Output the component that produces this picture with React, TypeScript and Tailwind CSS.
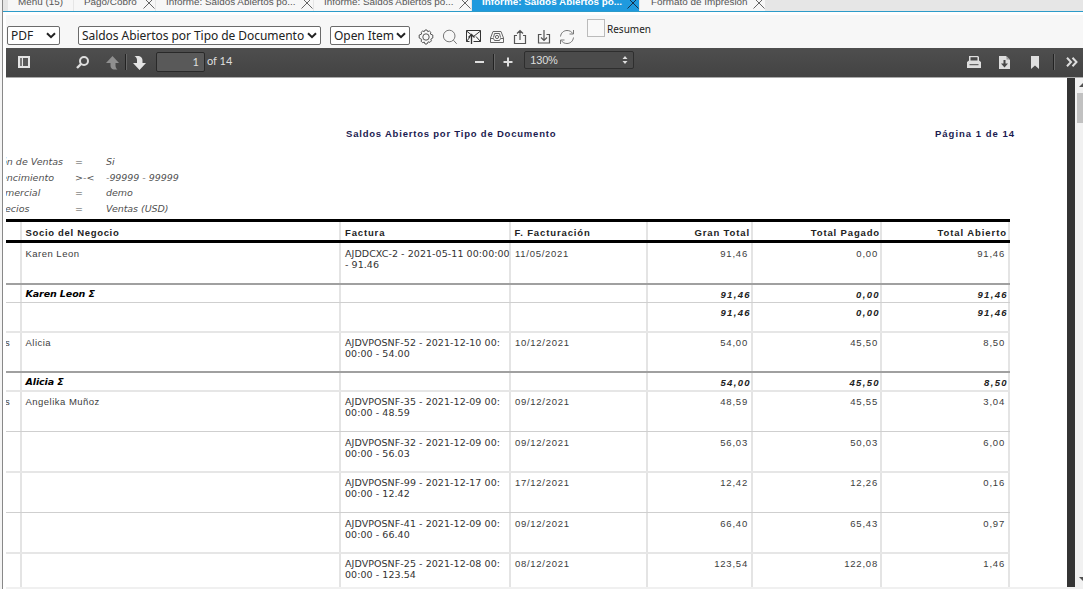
import type { ReactNode } from 'react';

type Tab = { label: string; width: string; pad: string; active?: boolean; closable: boolean };

const tabs: Tab[] = [
  { label: 'Menu (15)', width: 'w-[65px]', pad: 'pl-[10px]', closable: false },
  { label: 'Pago/Cobro', width: 'w-[81px]', pad: 'pl-[10px]', closable: true },
  { label: 'Informe: Saldos Abiertos po...', width: 'w-[157px]', pad: 'pl-[10px]', closable: true },
  { label: 'Informe: Saldos Abiertos po...', width: 'w-[157px]', pad: 'pl-[10px]', closable: true },
  { label: 'Informe: Saldos Abiertos po...', width: 'w-[167px]', pad: 'pl-[10px]', active: true, closable: true },
  { label: 'Formato de Impresión', width: 'w-[125px]', pad: 'pl-[11px]', closable: true },
];

function Close({ dark }: { dark?: boolean }) {
  return (
    <svg className="absolute right-0 top-[-3px]" width="12" height="12" viewBox="0 0 12 12" fill="none" stroke={dark ? '#17304a' : '#666'} strokeWidth="1">
      <path d="M.5.5 11.5 11.5M11.5.5.5 11.5" />
    </svg>
  );
}

function TabStrip() {
  return (
    <div className="flex h-3 overflow-hidden border-b border-[#2c9bc9] bg-[#e6e6e6] pl-[5px]">
      {tabs.map((t, i) => (
        <div
          key={i}
          className={`relative h-[11px] shrink-0 ${t.width} ${t.pad} ${i === 5 ? '' : 'mr-px'} ${t.active ? 'bg-[#1f9ade] font-bold text-white' : 'bg-[#f7f7f7] text-[#555]'}`}
        >
          <span className="-mt-1 block whitespace-nowrap text-[9.9px] leading-3">{t.label}</span>
          {t.closable && <Close dark={t.active} />}
        </div>
      ))}
    </div>
  );
}

function Select({ label, className }: { label: string; className: string }) {
  return (
    <div className={`flex h-[19px] items-center justify-between rounded-[2px] border border-[#6b6b6b] bg-white pl-[3px] pr-[3px] font-['Noto_Sans'] text-[12px] text-[#222] ${className}`}>
      <span className="whitespace-nowrap leading-4 tracking-[-0.05px]">{label}</span>
      <svg width="10" height="7" viewBox="0 0 10 7" fill="none" stroke="#222" strokeWidth="2">
        <path d="m1 1.2 4 4 4-4" />
      </svg>
    </div>
  );
}

function Icon({ children, color = '#555' }: { children: ReactNode; color?: string }) {
  return (
    <svg width="16" height="16" viewBox="0 0 16 16" fill="none" stroke={color} strokeWidth="1">
      {children}
    </svg>
  );
}

function ReportToolbar() {
  return (
    <div className="flex h-[33px] bg-[#f7f7f7] pl-px pt-[11px]">
      <Select label="PDF" className="w-[53px]" />
      <Select label="Saldos Abiertos por Tipo de Documento" className="ml-[18px] w-[243px]" />
      <Select label="Open Item" className="ml-[9px] w-[80px]" />
      <div className="ml-2 mt-[3px] flex gap-[7.5px]">
        <Icon>
          <circle cx="8" cy="8" r="3.2" />
          <path d="M6.300 2.600 7 1h2l.700 1.600 1.700-.6 1.500 1.400-.6 1.600L14.800 6v3l-2 1.200.6 1.700-1.500 1.500-1.700-.6L9 15H7l-.7-1.900-1.700.6-1.500-1.500.6-1.700L1.200 9V6l2.500-1-.6-1.600L4.600 2z" />
        </Icon>
        <Icon color="#777">
          <circle cx="7.2" cy="7" r="5.8" />
          <path d="m11.4 11.2 3.3 3.6" />
        </Icon>
        <Icon color="#333">
          <path d="M4.500 12.500h-3v-11h14v11h-7M1.500 2 8.500 7.500 15.500 2M1.500 12.500 5 8M15.500 12.500l-4.500-5" />
          <path d="M6.500 15V6M3.500 8.500l3-3 3 3" strokeWidth="1.300" />
        </Icon>
        <Icon color="#666">
          <path d="M1.500 9 4 2.500h8L14.500 9v4.500h-13zM1.500 9.500h3l1 2h5l1-2h3" />
          <path d="M4.500 8.500 5.500 4.500h5l1 4" />
          <circle cx="8" cy="8" r="1.600" />
        </Icon>
        <Icon>
          <path d="M5 6.500H2.500v8h11v-8H11M8 11V1.500M5 4.500l3-3 3 3" strokeWidth="1.200" />
        </Icon>
        <Icon>
          <path d="M5.500 5.500h-3v8.500h11V5.500h-3M8 1v10M5 8.500l3 3 3-3" strokeWidth="1.200" />
        </Icon>
        <Icon color="#777">
          <path d="M1.500 7.500C2 3.500 5 1.500 8 1.500c2.500 0 4.500 1 5.700 3M14.500 1v4h-4M14.500 8.500c-.5 4-3.500 6-6.500 6-2.500 0-4.500-1-5.700-3M1.500 15v-4h4" />
        </Icon>
      </div>
      <div className="-mt-[7px] ml-[12px] h-[18px] w-[18px] border border-[#bbb] bg-[#f9f9f9]" />
      <span className="-mt-[5px] ml-[2px] font-['Noto_Sans'] text-[10px] leading-4 text-[#222]">Resumen</span>
    </div>
  );
}

function Divider({ className }: { className: string }) {
  return <div className={`h-4 w-0.5 border-l border-[#222] bg-[#666] ${className}`} />;
}

function PdfToolbar() {
  return (
    <div className="flex h-[29px] items-center bg-linear-to-b from-[#4e4e4e] to-[#434343] pb-px text-[#dedede]">
      <svg className="ml-3" width="12" height="12" viewBox="0 0 12 12">
        <path d="M0 0h12v12H0z" fill="#e4e4e4" />
        <path d="M2 2h2v8H2z" fill="#777" />
        <path d="M5 2h5v8H5z" fill="#585858" />
      </svg>
      <svg className="ml-[46px]" width="13" height="13" viewBox="0 0 13 13" fill="none" stroke="#dedede">
        <circle cx="8" cy="5" r="4" strokeWidth="2" />
        <path d="M5 8 1 12" strokeWidth="2.400" />
      </svg>
      <svg className="ml-[17px] mt-px" width="13" height="14" viewBox="0 0 13 14" fill="#8f8f8f">
        <path d="M6.500 0 13 7H9.500v2.500c0 2 .8 3 2 4H7.500c-2-.6-3-2-3-4V7H0z" />
      </svg>
      <Divider className="ml-[6px]" />
      <svg className="ml-[6px] mt-px" width="13" height="14" viewBox="0 0 13 14" fill="#e4e4e4">
        <path d="M6.500 14 13 7H9.500V4.500c0-2-1-4-3.500-4.500H1.500c1.500 1 2.500 2 2.500 4V7H0z" />
      </svg>
      <div className="-mt-px ml-[10px] h-5 w-[49px] rounded-[2px] border border-[#292929] bg-[#595959] pr-[5px] text-right font-['Lato'] text-[11px] leading-[17px]">1</div>
      <span className="-mt-[2px] ml-[2px] font-['Lato'] text-[11px] leading-4">of 14</span>
      <div className="ml-[243px] h-0.5 w-[9px] bg-[#dedede]" />
      <Divider className="ml-[9px]" />
      <svg className="ml-[8px]" width="10" height="10" viewBox="0 0 10 10" stroke="#dedede" strokeWidth="2">
        <path d="M5 .5v9M.5 5h9" />
      </svg>
      <div className="-mt-1 ml-[11px] flex h-[18px] w-[110px] items-center justify-between rounded-[2px] border border-[#2e2e2e] bg-[#4b4b4b] pl-[5px] pr-[5px] text-[11px] leading-4">
        <span className="tracking-[-0.2px]">130%</span>
        <svg width="6" height="8" viewBox="0 0 6 8" fill="#dedede">
          <path d="m3 0 2.500 3h-5zM3 8 .5 5h5z" />
        </svg>
      </div>
      <svg className="ml-auto" width="14" height="13" viewBox="0 0 14 13">
        <path d="M2 4.500V0h9l1 1v3.500l2 1.500V12H0V6z" fill="#dedede" />
        <path d="M3.500 1.200h7V4.500h-7z" fill="#484848" />
        <path d="M2.500 8.200h9v1h-9z" fill="#484848" />
      </svg>
      <svg className="ml-[18px]" width="11" height="13" viewBox="0 0 11 13">
        <path d="M0 0h7l4 4v9H0z" fill="#dedede" />
        <path d="M7.500 0v3.500H11z" fill="#999" />
        <path d="M4.500 4h2v3.500H9l-3.500 4L2 7.500h2.500z" fill="#484848" />
      </svg>
      <svg className="ml-[21px]" width="8" height="13" viewBox="0 0 8 13" fill="#dedede">
        <path d="M0 0h8v13L4 9.500 0 13z" />
      </svg>
      <Divider className="ml-[14px]" />
      <svg className="ml-[11px] mr-[5px]" width="12" height="10" viewBox="0 0 12 10" fill="none" stroke="#dedede" strokeWidth="2">
        <path d="m1 .7 4 4.300-4 4.300M6.500.7l4 4.300-4 4.300" />
      </svg>
    </div>
  );
}

const params = [
  { name: 'ón de Ventas', shift: '-ml-[5px]', op: '=', value: 'Si' },
  { name: 'encimiento', shift: '-ml-[5px]', op: '>-<', value: '-99999 - 99999' },
  { name: 'mercial', shift: '-ml-px', op: '=', value: 'demo' },
  { name: 'ecios', shift: '-ml-px', op: '=', value: 'Ventas (USD)' },
];

type Row = {
  h: string;
  pad: string;
  line: string;
  edge?: string;
  partner?: string;
  invoice?: string[];
  date?: string;
  amounts: string[];
  total?: boolean;
};

const SOFT = 'border-b-2 border-[#e6e6e6]';
const THIN = 'border-b border-[#cfcfcf]';
const DARK = 'border-b-2 border-[#a0a0a0]';

const rows: Row[] = [
  { h: 'h-[42px]', pad: 'pt-[5px]', line: DARK, partner: 'Karen Leon', invoice: ['AJDDCXC-2 - 2021-05-11 00:00:00', '- 91.46'], date: '11/05/2021', amounts: ['91,46', '0,00', '91,46'] },
  { h: 'h-[18px]', pad: 'pt-[4px]', line: THIN, partner: 'Karen Leon Σ', amounts: ['91,46', '0,00', '91,46'], total: true },
  { h: 'h-[30px]', pad: 'pt-[4px]', line: SOFT, amounts: ['91,46', '0,00', '91,46'], total: true },
  { h: 'h-[40px]', pad: 'pt-[4px]', line: DARK, edge: 's', partner: 'Alicia', invoice: ['AJDVPOSNF-52 - 2021-12-10 00:', '00:00 - 54.00'], date: '10/12/2021', amounts: ['54,00', '45,50', '8,50'] },
  { h: 'h-[19px]', pad: 'pt-[4px]', line: SOFT, partner: 'Alicia Σ', amounts: ['54,00', '45,50', '8,50'], total: true },
  { h: 'h-[40px]', pad: 'pt-[4px]', line: THIN, edge: 's', partner: 'Angelika Muñoz', invoice: ['AJDVPOSNF-35 - 2021-12-09 00:', '00:00 - 48.59'], date: '09/12/2021', amounts: ['48,59', '45,55', '3,04'] },
  { h: 'h-[41px]', pad: 'pt-[5px]', line: SOFT, invoice: ['AJDVPOSNF-32 - 2021-12-09 00:', '00:00 - 56.03'], date: '09/12/2021', amounts: ['56,03', '50,03', '6,00'] },
  { h: 'h-[40px]', pad: 'pt-[4px]', line: THIN, invoice: ['AJDVPOSNF-99 - 2021-12-17 00:', '00:00 - 12.42'], date: '17/12/2021', amounts: ['12,42', '12,26', '0,16'] },
  { h: 'h-[41px]', pad: 'pt-[5px]', line: SOFT, invoice: ['AJDVPOSNF-41 - 2021-12-09 00:', '00:00 - 66.40'], date: '09/12/2021', amounts: ['66,40', '65,43', '0,97'] },
  { h: 'h-[42px]', pad: 'pt-[4px]', line: SOFT, invoice: ['AJDVPOSNF-25 - 2021-12-08 00:', '00:00 - 123.54'], date: '08/12/2021', amounts: ['123,54', '122,08', '1,46'] },
];

const COLS = 'grid grid-cols-[16px_319px_170px_137px_105px_129px_128px]';
const amountPads = ['pr-[3px]', 'pr-[2px]', 'pr-[3px]'];

function Cell({ children, className = '' }: { children?: ReactNode; className?: string }) {
  return <div className={`whitespace-nowrap border-r-2 border-[#e4e4e4] ${className}`}>{children}</div>;
}

function ReportTable() {
  return (
    <div className="mt-[3px] w-[1004px] text-[9.5px] leading-[11px]">
      <div className={`${COLS} h-6 border-y-[3px] border-black font-bold text-[#222]`}>
        <Cell />
        <Cell className="pl-[3.5px] pt-[5px] tracking-[0.68px]">Socio del Negocio</Cell>
        <Cell className="pl-[4px] pt-[5px] tracking-[0.85px]">Factura</Cell>
        <Cell className="pl-[3.5px] pt-[5px] tracking-[0.88px]">F. Facturación</Cell>
        <Cell className="pr-px pt-[5px] text-right tracking-[0.88px]">Gran Total</Cell>
        <Cell className="pt-[5px] text-right tracking-[0.85px]">Total Pagado</Cell>
        <Cell className="pr-px pt-[5px] text-right tracking-[0.92px]">Total Abierto</Cell>
      </div>
      {rows.map((r, i) => (
        <div key={i} className={`${COLS} text-[#3c3c3c] ${r.h} ${r.line}`}>
          <Cell className={`overflow-hidden ${r.pad}`}>
            <span className="-ml-px">{r.edge}</span>
          </Cell>
          <Cell className={`pl-[3.5px] ${r.pad} ${r.total ? "font-['DejaVu_Sans'] font-bold italic tracking-[-0.1px] text-black" : 'tracking-[0.48px]'}`}>
            <div className={r.total ? '-mt-px' : ''}>{r.partner}</div>
          </Cell>
          <Cell className={`pl-[4px] font-['DejaVu_Sans'] tracking-[0.06px] text-[#333] ${r.pad}`}>
            {r.invoice?.map((l) => (
              <div key={l}>{l}</div>
            ))}
          </Cell>
          <Cell className={`pl-[4px] tracking-[0.72px] ${r.pad}`}>{r.date}</Cell>
          {r.amounts.map((a, j) => (
            <Cell key={j} className={`text-right ${r.pad} ${r.total ? 'font-bold italic tracking-[1.35px] text-[#222]' : `tracking-[0.8px] ${amountPads[j]}`}`}>
              {a}
            </Cell>
          ))}
        </div>
      ))}
    </div>
  );
}

function ReportPage() {
  return (
    <div className="h-[509px] w-[1061px] overflow-hidden bg-white">
      <div className="flex h-[76px] pt-[50px] text-[9.5px] font-bold leading-[11px] text-[#1b1b50]">
        <span className="ml-[340px] w-[589px] tracking-[0.79px]">Saldos Abiertos por Tipo de Documento</span>
        <span className="tracking-[1px]">Página 1 de 14</span>
      </div>
      <div className="h-[62px] overflow-hidden font-['DejaVu_Sans'] text-[9.5px] italic leading-[15.6px] text-[#505050]">
        {params.map((p) => (
          <div key={p.name} className="flex">
            <span className="w-[69px] overflow-hidden whitespace-nowrap">
              <span className={p.shift}>{p.name}</span>
            </span>
            <span className="w-[31px]">{p.op}</span>
            <span className="tracking-[-0.05px]">{p.value}</span>
          </div>
        ))}
      </div>
      <ReportTable />
    </div>
  );
}

function Scrollbar() {
  return (
    <div className="flex h-[509px] w-2 flex-col overflow-hidden bg-[#f1f1f1] pl-0.5">
      <svg className="mt-[5px] shrink-0" width="8" height="4" viewBox="0 0 8 4" fill="#505050">
        <path d="m2 4 4-4 4 4z" />
      </svg>
      <div className="mt-[6px] h-[30px] w-[6px] shrink-0 bg-[#c1c1c1]" />
      <svg className="mb-[6px] mt-auto shrink-0" width="8" height="4" viewBox="0 0 8 4" fill="#505050">
        <path d="m2 0 4 4 4-4z" />
      </svg>
    </div>
  );
}

export default function App() {
  return (
    <div className="flex h-[589px] w-[1083px] overflow-hidden bg-[#f0f0f0] font-['Liberation_Sans',sans-serif]">
      <div className="w-[3px] shrink-0 border-r border-[#888] bg-[#f4f4f4]" />
      <div className="w-[1080px] shrink-0 bg-white">
        <TabStrip />
        <div className="ml-[3px] mt-[3px]">
          <ReportToolbar />
          <PdfToolbar />
          <div className="h-px bg-[#aaa]" />
          <div className="flex bg-[#343434]">
            <ReportPage />
            <div className="w-2" />
            <Scrollbar />
          </div>
          <div className="h-0.5 bg-[#f0f0f0]" />
        </div>
      </div>
    </div>
  );
}
